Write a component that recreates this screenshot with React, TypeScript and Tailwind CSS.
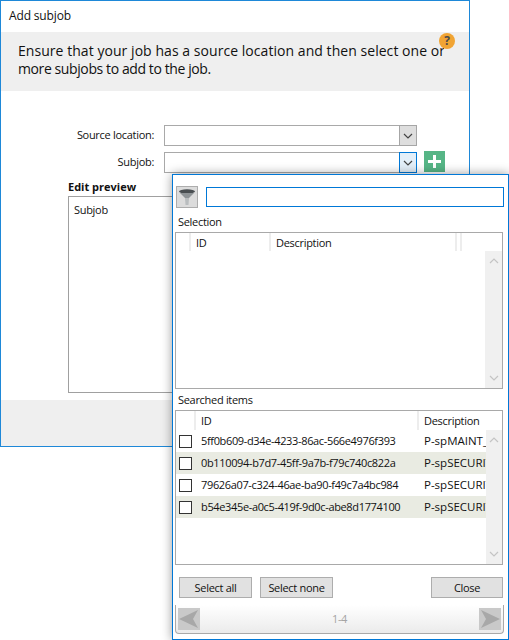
import { ReactNode } from "react";

const rows = [
    { id: "5ff0b609-d34e-4233-86ac-566e4976f393", desc: "P-spMAINT_PLAN" },
    { id: "0b110094-b7d7-45ff-9a7b-f79c740c822a", desc: "P-spSECURITY" },
    { id: "79626a07-c324-46ae-ba90-f49c7a4bc984", desc: "P-spSECURITY" },
    { id: "b54e345e-a0c5-419f-9d0c-abe8d1774100", desc: "P-spSECURITY" },
];

function Chevron({ up, color = "#444" }: { up?: boolean; color?: string }) {
    return (
        <svg width="10" height="6" viewBox="0 0 10 6" fill="none">
            <path d={up ? "M1 5 L5 1 L9 5" : "M1 1 L5 5 L9 1"} stroke={color} strokeWidth="1.2" />
        </svg>
    );
}

function Combo({ active }: { active?: boolean }) {
    return (
        <div className="flex h-[21px] w-[253px] justify-end border border-[#a9a9a9] bg-white">
            <div
                className={
                    active
                        ? "-my-px -mr-px flex w-[18px] items-center justify-center border border-[#0078d7] bg-[#e3eff9]"
                        : "-my-px -mr-px flex w-[18px] items-center justify-center border border-[#a6a6a6] bg-[#dedede]"
                }
            >
                <Chevron />
            </div>
        </div>
    );
}

function Scrollbar() {
    return (
        <div className="flex w-[17px] flex-col items-center justify-between self-stretch bg-[#f0f0f0] py-[7px]">
            <Chevron up color="#c4c4c4" />
            <Chevron color="#c4c4c4" />
        </div>
    );
}

function PopButton({ children, className }: { children: ReactNode; className: string }) {
    return (
        <button className={`flex h-[21px] items-center justify-center border border-[#adadad] bg-[#e1e1e1] pt-px text-[#111] ${className}`}>
            {children}
        </button>
    );
}

function Arrow({ dir }: { dir: "left" | "right" }) {
    return (
        <div className="flex h-[22px] w-[22px] items-center justify-center bg-[#c9c9c9]">
            <svg width="20" height="18" viewBox="0 0 20 18">
                <path d={dir === "left" ? "M0 9 L19 0 L14 9 L19 18 Z" : "M20 9 L1 0 L6 9 L1 18 Z"} fill="#a8a8a8" />
            </svg>
        </div>
    );
}

function FilterPopup() {
    return (
        <div className="absolute left-[172px] top-[174px] flex h-[466px] w-[337px] flex-col border border-[#0078d7] bg-white pl-[2px] pr-[4px] text-[11px] tracking-[-0.3px] text-[#111] shadow-[0_0_10px_rgba(0,0,0,0.4)]">
            <div className="mt-[11px] flex items-center gap-[8px] pl-[1px]">
                <div className="flex h-[22px] w-[22px] items-center justify-center border border-[#adadad] bg-[#dcdcdc]">
                    <svg width="18" height="18" viewBox="0 0 18 18">
                        <ellipse cx="9" cy="3.5" rx="8" ry="2.2" fill="#4a4f52" />
                        <path d="M2 5 L16 5 L11 10 L7 10 Z" fill="#8f9497" />
                        <path d="M7 10 L11 10 L10.5 17 L7.5 17 Z" fill="#b9bdbf" />
                    </svg>
                </div>
                <div className="h-[20px] flex-1 border border-[#0078d7]" />
            </div>

            <div className="mt-[5px] mb-[1px] h-[18px] pl-[3px] leading-[18px]">Selection</div>
            <div className="flex h-[157px] w-[328px] flex-col border border-[#a9a9a9]">
                <div className="flex h-[18px]">
                    <div className="w-[15px] border-r-2 border-[#ededed]" />
                    <div className="w-[80px] border-r-2 border-[#ededed] pl-[5px] leading-[20px]">ID</div>
                    <div className="w-[186px] border-r-2 border-[#ededed] pl-[5px] leading-[20px]">Description</div>
                    <div className="w-[5px] border-r-2 border-[#ededed]" />
                </div>
                <div className="flex flex-1 justify-end">
                    <Scrollbar />
                </div>
            </div>

            <div className="mt-[1px] h-[20px] pl-[3px] leading-[20px]">Searched items</div>
            <div className="flex h-[155px] w-[328px] flex-col border border-[#a9a9a9]">
                <div className="flex h-[19px]">
                    <div className="w-[20px] border-r-2 border-[#ededed]" />
                    <div className="w-[223px] border-r-2 border-[#ededed] pl-[5px] leading-[20px]">ID</div>
                    <div className="flex-1 pl-[5px] leading-[20px]">Description</div>
                </div>
                <div className="flex flex-1">
                    <div className="w-[310px]">
                        {rows.map((row, i) => (
                            <div key={row.id} className={`flex h-[22px] items-center overflow-hidden whitespace-nowrap ${i % 2 ? "bg-[#e9ebe2]" : "bg-white"}`}>
                                <div className="ml-[3px] h-[13px] w-[13px] shrink-0 border border-[#333] bg-white" />
                                <div className="ml-[9px] w-[223px] shrink-0 tracking-[-0.35px]">{row.id}</div>
                                <div className="text-[11.5px] tracking-normal">{row.desc}</div>
                            </div>
                        ))}
                    </div>
                    <Scrollbar />
                </div>
            </div>

            <div className="mt-[12px] flex pl-[4px] pr-[1px]">
                <PopButton className="w-[73px]">Select all</PopButton>
                <PopButton className="ml-[8px] w-[73px]">Select none</PopButton>
                <PopButton className="ml-auto w-[72px]">Close</PopButton>
            </div>

            <div className="mt-[7px] flex h-[29px] w-[329px] items-center justify-between rounded-b-[4px] border-x border-b border-[#a9a9a9] bg-gradient-to-b from-white to-[#ebebeb] px-[2px]">
                <Arrow dir="left" />
                <span className="text-[#a4a4a4]">1-4</span>
                <Arrow dir="right" />
            </div>
        </div>
    );
}

export default function App() {
    return (
        <div className="relative h-[640px] w-[509px] overflow-hidden bg-white font-['Open_Sans',sans-serif] text-[#111]">
            <div className="flex h-[447px] w-[470px] flex-col border border-[#1e88d8] bg-white">
                <div className="h-[31px] pl-[8px] pt-[7px] text-[12px] leading-[16px] tracking-[-0.15px]">Add subjob</div>
                <div className="relative h-[59px] bg-[#efefef] pl-[17px] pt-[10px] text-[14px] leading-[18px] tracking-[-0.4px]">
                    <div className="w-[426px] overflow-hidden whitespace-nowrap tracking-[0.05px]">Ensure that your job has a source location and then select one or</div>
                    <div>more subjobs to add to the job.</div>
                    <div className="absolute left-[438px] top-[1px] flex h-[16px] w-[16px] items-center justify-center rounded-full bg-[#f1a433] text-[12px] font-bold leading-none tracking-normal text-[#4a4a4a]">
                        ?
                    </div>
                </div>

                <div className="flex flex-col pt-[34px] text-[11px] tracking-[-0.3px]">
                    <div className="flex items-center">
                        <div className="w-[153px] text-right">Source location:</div>
                        <div className="ml-[10px]">
                            <Combo />
                        </div>
                    </div>
                    <div className="mt-[6px] flex items-center">
                        <div className="w-[153px] text-right">Subjob:</div>
                        <div className="ml-[10px]">
                            <Combo active />
                        </div>
                        <div className="ml-[7px] flex h-[21px] w-[21px] -translate-y-px items-center justify-center bg-[#56b586]">
                            <svg width="15" height="15" viewBox="0 0 15 15">
                                <path d="M6 1 H9 V6 H14 V9 H9 V14 H6 V9 H1 V6 H6 Z" fill="#fff" />
                            </svg>
                        </div>
                    </div>
                    <div className="ml-[67px] mb-[1px] mt-[5px] h-[17px] font-bold leading-[17px] tracking-normal">Edit preview</div>
                    <div className="ml-[67px] h-[197px] w-[349px] border border-[#a0a0a0] pl-[5px] pt-[5px]">Subjob</div>
                </div>

                <div className="mt-auto h-[46px] bg-[#efefef]" />
            </div>
            <FilterPopup />
        </div>
    );
}
